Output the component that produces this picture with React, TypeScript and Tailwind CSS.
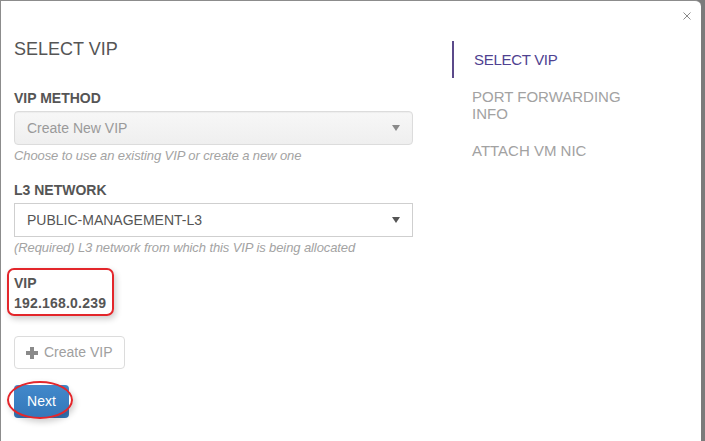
import React from "react";

const font = { fontFamily: '"Liberation Sans", Arial, sans-serif' };

// small caret used in the select boxes
const Caret = ({ className }: { className: string }) => (
  <svg width="8" height="6" viewBox="0 0 8 6" className={className}>
    <path d="M0 0 L8 0 L4 6 Z" fill="currentColor" />
  </svg>
);

const Label = ({ children, className = "" }: { children: React.ReactNode; className?: string }) => (
  <div className={`text-[14px] leading-[20px] font-bold text-[#555] ${className}`}>{children}</div>
);

const Help = ({ children }: { children: React.ReactNode }) => (
  <div className="mt-[2px] text-[13px] leading-[18px] italic tracking-[-0.1px] text-[#a3a3a3]">{children}</div>
);

const steps = [
  { title: "SELECT VIP", active: true },
  { title: "PORT FORWARDING INFO", active: false },
  { title: "ATTACH VM NIC", active: false },
];

export default function App() {
  return (
    <div className="w-[705px] h-[441px] overflow-hidden bg-[#7b7b7b]" style={font}>
      <div className="relative w-[701px] h-[460px] bg-white border-l border-t border-[#8c8c8c] rounded-tr-[6px] flex">
        {/* close */}
        <button className="absolute left-[681px] top-[10px] w-[10px] h-[10px] flex items-center justify-center text-[#8a8a8a]">
          <svg width="8" height="8" viewBox="0 0 8 8">
            <path d="M0.5 0.5 L7.5 7.5 M7.5 0.5 L0.5 7.5" stroke="currentColor" strokeWidth="1" />
          </svg>
        </button>

        {/* form */}
        <div className="w-[413px] pl-[13px] pt-[38px]">
          <h1 className="text-[18px] leading-[20px] text-[#555] font-normal">SELECT VIP</h1>

          <Label className="mt-[29px]">VIP METHOD</Label>
          <div className="mt-[3px] h-[34px] w-[399px] rounded-[4px] border border-[#dcdcdc] bg-gradient-to-b from-[#f7f7f7] to-[#efefef] shadow-[inset_0_1px_1px_rgba(0,0,0,0.04)] flex items-center justify-between pl-[12px] pr-[12px]">
            <span className="text-[14px] text-[#9a9a9a]">Create New VIP</span>
            <Caret className="text-[#8a8a8a]" />
          </div>
          <Help>Choose to use an existing VIP or create a new one</Help>

          <Label className="mt-[15px]">L3 NETWORK</Label>
          <div className="mt-[3px] h-[34px] w-[399px] border border-[#cfcfcf] bg-white flex items-center justify-between pl-[12px] pr-[12px]">
            <span className="text-[14px] text-[#555]">PUBLIC-MANAGEMENT-L3</span>
            <Caret className="text-[#555]" />
          </div>
          <Help>(Required) L3 network from which this VIP is being allocated</Help>

          <div className="relative mt-[16px]">
            <Label>VIP</Label>
            <Label className="tracking-[0.2px]">192.168.0.239</Label>
            <div className="absolute -left-[7px] -top-[5px] w-[107px] h-[48px] rounded-[7px] border-2 border-[#e3262b] shadow-[2px_3px_6px_rgba(0,0,0,0.2)]" />
          </div>

          <button className="mt-[23px] h-[33px] w-[111px] rounded-[4px] border border-[#dcdcdc] bg-white flex items-center pl-[11px] text-[14px] text-[#a0a0a0]">
            <svg width="12" height="12" viewBox="0 0 12 12" className="mr-[6px] text-[#8a8a8a]">
              <path d="M4 0 H8 V4 H12 V8 H8 V12 H4 V8 H0 V4 H4 Z" fill="currentColor" />
            </svg>
            Create VIP
          </button>

          <div className="relative mt-[16px] w-[55px]">
            <button className="h-[33px] w-[55px] rounded-[4px] bg-gradient-to-b from-[#4289cb] to-[#3477b9] text-white text-[14px]">
              Next
            </button>
            <div className="absolute -left-[7px] -top-[4px] w-[66px] h-[38px] rounded-[50%] border-2 border-[#e3262b] shadow-[2px_3px_6px_rgba(0,0,0,0.2)]" />
          </div>
        </div>

        {/* steps */}
        <div className="ml-[38px] pt-[40px]">
          {steps.map((s) => (
            <div
              key={s.title}
              className={`border-l-2 pt-[10px] pb-[10px] ${s.active ? "border-[#5b4a8a] pl-[20px]" : "border-transparent pl-[18px]"}`}
            >
              <div
                className={`w-[165px] text-[15px] leading-[17px] ${s.active ? "text-[#4f4290] tracking-[-0.3px]" : "text-[#a2a2a2]"}`}
              >
                {s.title}
              </div>
            </div>
          ))}
        </div>
      </div>
    </div>
  );
}
